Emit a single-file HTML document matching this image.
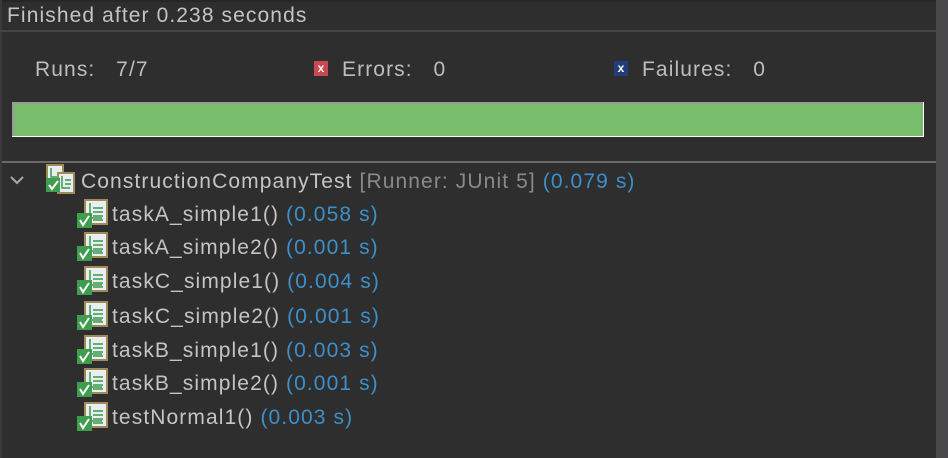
<!DOCTYPE html>
<html><head><style>
body{margin:0;width:948px;height:458px;background:#2e2e2e;overflow:hidden;font-family:"Liberation Sans",sans-serif;position:relative;color:#bdbdbd}
.a{position:absolute;white-space:nowrap}
.t{font-size:21px;letter-spacing:1.1px}
.b{color:#3d8fc9}
.g{color:#8a8a8a}
</style></head><body>
<div class="a" style="left:0;top:0;width:936px;height:2px;background:#262626"></div>
<div class="a" style="left:936px;top:0;width:12px;height:458px;background:#49494b"></div>
<div class="a" style="left:0;top:0;width:2px;height:458px;background:#3a3a3a"></div>
<div class="a t" style="left:7px;top:4px;color:#c4c4c4">Finished after 0.238 seconds</div>
<div class="a" style="left:0;top:30px;width:936px;height:2px;background:#454545"></div>
<div class="a t" style="left:35px;top:58px">Runs:&nbsp;&nbsp;&nbsp;7/7</div>
<div class="a" style="left:314px;top:61px;width:14px;height:15px;background:#c9494f;color:#fff;font-size:12px;font-weight:bold;text-align:center;line-height:14px">x</div>
<div class="a t" style="left:342px;top:58px">Errors:&nbsp;&nbsp;&nbsp;0</div>
<div class="a" style="left:614px;top:61px;width:14px;height:15px;background:#233d7c;color:#fff;font-size:12px;font-weight:bold;text-align:center;line-height:14px">x</div>
<div class="a t" style="left:642px;top:58px">Failures:&nbsp;&nbsp;&nbsp;0</div>
<div class="a" style="left:12px;top:102px;width:912px;height:35px;background:#fff"></div>
<div class="a" style="left:12px;top:102px;width:911px;height:34px;background:#77bd6b;border-top:2px solid #9a9a9a;box-sizing:border-box;border-left:2px solid #9a9a9a"></div>
<div class="a" style="left:2px;top:161px;width:934px;height:2px;background:#6a6a6a"></div>
<svg class="a" style="left:9px;top:174px" width="16" height="12"><path d="M2 3 L8 9 L14 3" stroke="#aaa" stroke-width="2" fill="none"/></svg>
<svg class="a" style="left:45px;top:164px" width="32" height="30">
<rect x="2" y="1" width="16" height="18" fill="#e9eef3" stroke="#a08a55" stroke-width="2"/>
<rect x="13" y="9" width="16" height="20" fill="#e9eef3" stroke="#a08a55" stroke-width="2"/>
<path d="M6 4v9h6M17 12v12h8M20 16h6M20 20h6" stroke="#3b9a4a" stroke-width="1.5" fill="none"/>
<rect x="1" y="14" width="14" height="14" fill="#3f9d4f"/>
<path d="M4 21l3 4 6-8" stroke="#fff" stroke-width="2" fill="none"/>
</svg>
<div class="a t" style="left:81px;top:170px;color:#c4c4c4">ConstructionCompanyTest <span class="g">[Runner: JUnit 5]</span> <span class="b">(0.079 s)</span></div>
<div id="rows"></div>
<script>
var r=[["taskA_simple1()","(0.058 s)",204],["taskA_simple2()","(0.001 s)",237],["taskC_simple1()","(0.004 s)",271],["taskC_simple2()","(0.001 s)",306],["taskB_simple1()","(0.003 s)",340],["taskB_simple2()","(0.001 s)",373],["testNormal1()","(0.003 s)",407]];
var h="";
r.forEach(function(x){var y=x[2];
h+='<svg class="a" style="left:76px;top:'+(y-6)+'px" width="32" height="32"><rect x="9" y="2" width="22" height="24" fill="#e9eef3" stroke="#a08a55" stroke-width="2"/><path d="M14 5v15h12M17 10h10M17 14h10M17 18h10M17 22h10" stroke="#3b9a4a" stroke-width="1.5" fill="none"/><rect x="1" y="15" width="15" height="15" fill="#3f9d4f"/><path d="M4 22l3 5 6-9" stroke="#fff" stroke-width="2" fill="none"/></svg>';
h+='<div class="a t" style="left:112px;top:'+(y-1)+'px;color:#c4c4c4">'+x[0]+' <span class="b">'+x[1]+'</span></div>';});
document.getElementById("rows").innerHTML=h;
</script>
</body></html>
